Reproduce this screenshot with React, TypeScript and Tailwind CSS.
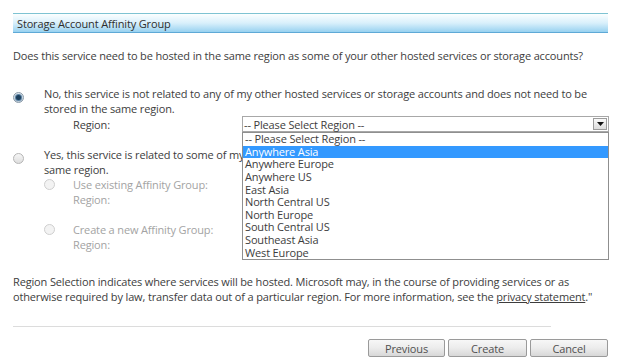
import React from "react";

const regions = [
  "-- Please Select Region --",
  "Anywhere Asia",
  "Anywhere Europe",
  "Anywhere US",
  "East Asia",
  "North Central US",
  "North Europe",
  "South Central US",
  "Southeast Asia",
  "West Europe",
];

function Radio({ checked, disabled }: { checked?: boolean; disabled?: boolean }) {
  if (checked) {
    return (
      <span className="flex h-[11px] w-[11px] items-center justify-center rounded-full border border-[#8a9aa8] bg-gradient-to-b from-[#dfe8ef] to-[#b9c9d6]">
        <span className="h-[5px] w-[5px] rounded-full bg-[#1d3f5c] ring-1 ring-[#5a82a3]" />
      </span>
    );
  }
  return (
    <span
      className={
        "block h-[11px] w-[11px] rounded-full border " +
        (disabled ? "border-[#cfcfcf] bg-[#f3f3f3]" : "border-[#b5b5b5] bg-gradient-to-b from-[#f6f6f6] to-[#dedede]")
      }
    />
  );
}

function Button({ label, w }: { label: string; w: string }) {
  return (
    <div
      className={
        "flex h-[18px] items-center justify-center rounded-[2px] border border-[#9a9a9a] bg-gradient-to-b from-[#f7f7f7] via-[#ececec] to-[#d8d8d8] text-[#505050] " +
        w
      }
    >
      {label}
    </div>
  );
}

export default function App() {
  return (
    <div
      className="relative h-[364px] w-[624px] overflow-hidden bg-white text-[11px] leading-[15px] tracking-[-0.15px] text-[#3d3d3d]"
      style={{ fontFamily: '"Open Sans", "Noto Sans", sans-serif' }}
    >
      <div className="flex flex-col px-[13px] pt-[13px]">
        {/* header */}
        <div className="flex h-[20px] w-[595px] items-center border-t border-b border-t-[#7ec3d2] border-b-[#5ea9d6] bg-gradient-to-b from-[#fbfeff] via-[#d9f0fb] to-[#97d1f0] pl-[4px] text-[#2e2e2e]">
          Storage Account Affinity Group
        </div>

        {/* question */}
        <div className="mt-[15px] whitespace-nowrap">
          Does this service need to be hosted in the same region as some of your other hosted services or storage accounts?
        </div>

        {/* option 1 */}
        <div className="mt-[23px] flex">
          <div className="w-[31px] pt-[6px]">
            <Radio checked />
          </div>
          <div className="flex flex-col">
            <span className="whitespace-nowrap">
              No, this service is not related to any of my other hosted services or storage accounts and does not need to be
            </span>
            <span>stored in the same region.</span>
            <div className="flex h-[16px] items-center">
              <span className="w-[198px] pl-[29px]">Region:</span>
              <div className="flex h-[16px] w-[367px] items-center justify-between border border-[#a8a8a8] bg-white pl-[1px] pr-[1px]">
                <span>-- Please Select Region --</span>
                <span className="flex h-[12px] w-[14px] items-center justify-center border border-[#9c9c9c] bg-gradient-to-b from-[#fafafa] to-[#dcdcdc]">
                  <svg width="7" height="4" viewBox="0 0 7 4">
                    <path d="M0 0h7L3.5 4z" fill="#111" />
                  </svg>
                </span>
              </div>
            </div>
          </div>
        </div>

        {/* option 2 */}
        <div className="mt-[15px] flex">
          <div className="w-[31px] pt-[6px]">
            <Radio />
          </div>
          <div className="flex flex-col">
            <span className="whitespace-nowrap">
              Yes, this service is related to some of my other hosted services and should be hosted in the
            </span>
            <span>same region.</span>
            <div className="flex flex-col text-[#a3a3a3]">
              <div className="flex items-center">
                <span className="w-[29px]">
                  <Radio disabled />
                </span>
                <span>Use existing Affinity Group:</span>
              </div>
              <span className="pl-[29px]">Region:</span>
              <div className="mt-[15px] flex items-center">
                <span className="w-[29px]">
                  <Radio disabled />
                </span>
                <span>Create a new Affinity Group:</span>
              </div>
              <span className="pl-[29px]">Region:</span>
            </div>
          </div>
        </div>

        {/* paragraph */}
        <div className="mt-[22px] whitespace-nowrap">
          Region Selection indicates where services will be hosted. Microsoft may, in the course of providing services or as
          <br />
          otherwise required by law, transfer data out of a particular region. For more information, see the{" "}
          <span className="underline">privacy statement</span>."
        </div>

        {/* divider */}
        <div className="mt-[22px] h-px w-[538px] bg-[#dcdcdc]" />

        {/* buttons */}
        <div className="mt-[12px] flex w-[595px] justify-end gap-[3px]">
          <Button label="Previous" w="w-[77px]" />
          <Button label="Create" w="w-[79px]" />
          <Button label="Cancel" w="w-[78px]" />
        </div>
      </div>

      {/* dropdown list overlay */}
      <div className="absolute left-[242px] top-[132px] flex h-[128px] w-[367px] flex-col border border-[#8f8f8f] bg-white">
        {regions.map((r, i) => (
          <div
            key={r}
            className={
              "flex h-[12.6px] shrink-0 items-center justify-start pl-[2px] leading-[12px] " +
              (i === 1 ? "bg-[#3399ff] text-white" : "text-[#3d3d3d]")
            }
          >
            {r}
          </div>
        ))}
      </div>
    </div>
  );
}
